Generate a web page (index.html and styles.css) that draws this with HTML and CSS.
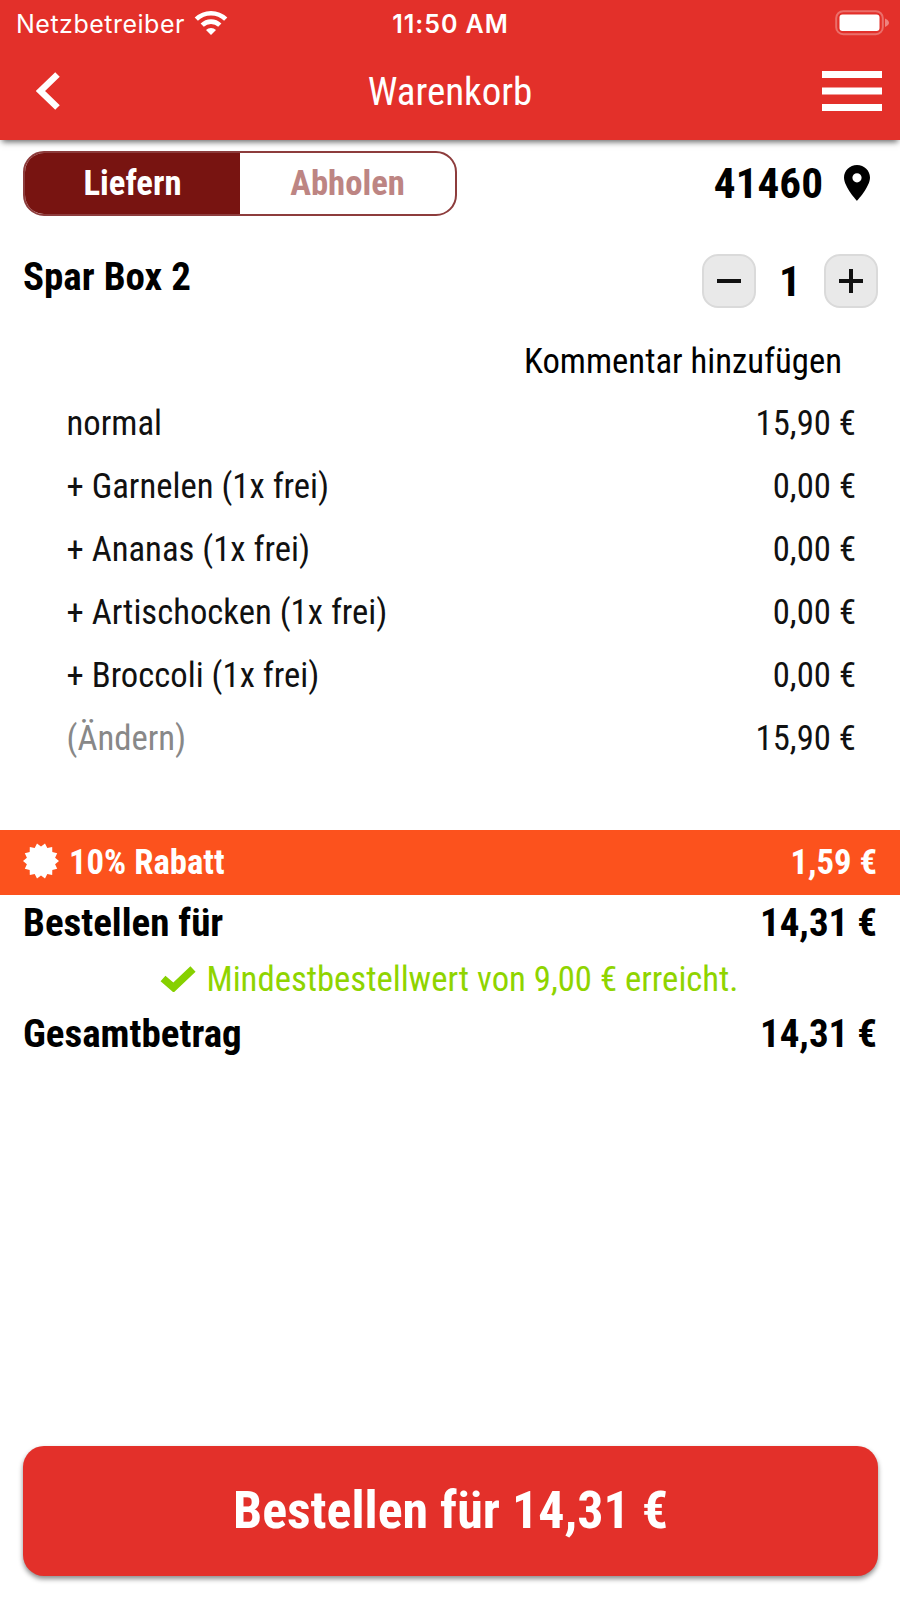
FILE: index.html
```html
<!DOCTYPE html>
<html lang="de">
<head>
<meta charset="utf-8">
<title>Warenkorb</title>
<link rel="stylesheet" href="styles.css">
</head>
<body>
<header class="header">
  <div class="status">
    <div class="carrier"><span>Netzbetreiber</span>
      <svg class="wifi" viewBox="0 0 34 26"><g fill="none" stroke="#fff" stroke-width="4.6"><path d="M2.300 9.200a21 21 0 0 1 29.400 0"/><path d="M8.200 15.200a12.600 12.600 0 0 1 17.600 0"/></g><path d="M17 25l-5-5.100a7.200 7.200 0 0 1 10 0z" fill="#fff"/></svg>
    </div>
    <div class="clock">11:50 AM</div>
    <svg class="battery" viewBox="0 0 54 26"><rect x="1.2" y="1.2" width="46.600" height="23" rx="7" fill="none" stroke="#fff" stroke-opacity=".3" stroke-width="2"/><rect x="4.500" y="4.500" width="40" height="16.500" rx="3" fill="#fff"/><path d="M50 8.500q4 2 4 4.300t-4 4.300z" fill="#fff" fill-opacity=".4"/></svg>
  </div>
  <nav class="nav">
    <svg class="back" viewBox="0 0 24 38"><path d="M21.500 2.500L4.500 19l17 16.500" fill="none" stroke="#fff" stroke-width="6.500"/></svg>
    <h1 class="title">Warenkorb</h1>
    <svg class="menu" viewBox="0 0 60 40"><path d="M0 3.500h60M0 20h60M0 36.500h60" stroke="#fff" stroke-width="7"/></svg>
  </nav>
</header>
<main class="main">
  <section class="mode">
    <div class="toggle"><span class="tab on">Liefern</span><span class="tab">Abholen</span></div>
    <div class="zip"><span>41460</span><svg class="pin" viewBox="0 0 26 36"><path fill-rule="evenodd" d="M13 0C5.700 0 0 5.700 0 12.600 0 22 13 36 13 36s13-14 13-23.400C26 5.700 20.300 0 13 0zm0 8.200a4.600 4.600 0 1 1 0 9.200 4.600 4.600 0 0 1 0-9.200z"/></svg></div>
  </section>
  <section class="item">
    <h2 class="name">Spar Box 2</h2>
    <div class="stepper">
      <span class="step"><svg viewBox="0 0 24 24"><path d="M0 12h24"/></svg></span>
      <span class="count">1</span>
      <span class="step"><svg viewBox="0 0 24 24"><path d="M0 12h24M12 0v24"/></svg></span>
    </div>
  </section>
  <div class="comment">Kommentar hinzufügen</div>
  <ul class="options">
    <li><span>normal</span><span>15,90 €</span></li>
    <li><span>+ Garnelen (1x frei)</span><span>0,00 €</span></li>
    <li><span>+ Ananas (1x frei)</span><span>0,00 €</span></li>
    <li><span>+ Artischocken (1x frei)</span><span>0,00 €</span></li>
    <li><span>+ Broccoli (1x frei)</span><span>0,00 €</span></li>
    <li><span class="edit">(Ändern)</span><span>15,90 €</span></li>
  </ul>
  <section class="discount">
    <svg class="seal" viewBox="-18 -18 36 36"><path fill="#fff" d="M0-14.500L4-17.500 6.300-13.100 11.200-14.100 11.300-9 16.200-7.800 14.100-3.200 18 0 14.100 3.200 16.200 7.800 11.300 9 11.200 14.100 6.300 13.100 4 17.500 0 14.500-4 17.500-6.300 13.100-11.200 14.100-11.300 9-16.200 7.800-14.100 3.200-18 0-14.100-3.200-16.200-7.800-11.300-9-11.200-14.100-6.300-13.100-4-17.500z"/></svg>
    <span class="rebate">10% Rabatt</span><span>1,59 €</span>
  </section>
  <div class="sum"><span>Bestellen für</span><span>14,31 €</span></div>
  <div class="minimum"><svg class="check" viewBox="0 0 36 26"><path d="M3 12.500l10.500 9L33 3" fill="none" stroke="#86d000" stroke-width="7.500"/></svg><span>Mindestbestellwert von 9,00 € erreicht.</span></div>
  <div class="sum"><span>Gesamtbetrag</span><span>14,31 €</span></div>
</main>
<footer class="footer"><button class="order">Bestellen für 14,31 €</button></footer>
</body>
</html>
```
FILE: styles.css
```css
* { box-sizing: border-box; }
body {
  margin: 0; height: 1598px; background: #fff; color: #000;
  display: flex; flex-direction: column;
  font: 34.7px/1 "Roboto Condensed", Roboto, sans-serif; font-stretch: 75%;
  white-space: nowrap;
}
svg { display: block; flex: none; }
.header { height: 140px; background: #e3302a; color: #fff; box-shadow: 0 4px 6px -2px rgba(0,0,0,.6); }
.status { height: 48px; padding: 0 11px 2px 16px; display: grid; grid-template-columns: 1fr 118px 1fr; align-items: center; font: 25px/1 Inter, sans-serif; letter-spacing: .5px; }
.carrier { display: flex; align-items: center; gap: 9px; padding-top: 3px; }
.wifi { width: 34px; height: 26px; margin-top: -4px; }
.clock { font-weight: 600; letter-spacing: .95px; text-align: center; padding-top: 3px; margin: 0 2px 0 -2px; }
.battery { width: 54px; height: 26px; justify-self: end; }
.nav { height: 86px; padding: 0 18px 0 36px; display: grid; grid-template-columns: 60px 1fr 60px; align-items: center; }
.back { width: 24px; height: 38px; }
.title { margin: 0; text-align: center; font-size: 39px; font-weight: 400; padding: 2px 18px 0 0; }
.menu { width: 60px; height: 40px; }
.main { flex: 1; }
.mode { padding: 11px 30px 0 23px; display: flex; justify-content: space-between; }
.toggle { width: 434px; height: 65px; border: 2px solid #8d3c3c; border-radius: 21px; overflow: hidden; display: flex; font-weight: 700; }
.tab { flex: 1; display: flex; align-items: center; justify-content: center; color: #bd8583; }
.on { background: #781411; color: #fff; }
.zip { display: flex; align-items: center; gap: 21px; height: 65px; font-size: 43.2px; font-weight: 700; }
.pin { width: 26px; height: 36px; margin-top: -2px; }
.item { padding: 38px 22px 0 23px; display: flex; justify-content: space-between; align-items: flex-start; }
.name { margin: 0; font-size: 39px; line-height: 46px; }
.stepper { display: flex; align-items: center; }
.step { width: 54px; height: 54px; border: 2px solid #dadada; border-radius: 16px; background: #e9e9e9; display: grid; place-items: center; }
.step svg { width: 24px; height: 24px; stroke: #111; stroke-width: 4; }
.count { width: 68px; padding-top: 2px; text-align: center; font-size: 43.2px; font-weight: 700; }
.comment { padding: 21px 58px 0 0; text-align: right; line-height: 64px; height: 84px; }
.options { list-style: none; margin: 0; padding: 0 44px 0 66.500px; color: #111; }
.options li { height: 63px; line-height: 63px; display: flex; justify-content: space-between; }
.edit { color: #888; }
.discount { margin-top: 60px; height: 65px; padding: 0 23px 1px; background: #fc521d; color: #fff; font-weight: 700; display: flex; align-items: center; }
.seal { width: 36px; height: 36px; margin-top: -3px; }
.rebate { flex: 1; padding-left: 10px; }
.sum { height: 56px; padding: 0 23px; display: flex; justify-content: space-between; align-items: center; font-size: 39px; font-weight: 700; }
.minimum { height: 55px; padding-top: 1px; display: flex; align-items: center; justify-content: center; gap: 10px; color: #8fd400; }
.check { width: 36px; height: 26px; margin-left: -1px; }
.footer { padding: 0 22px 22px 23px; }
.order { display: block; width: 100%; height: 130px; padding: 0; border: 0; border-radius: 21px; background: #e3302a; color: #fff; font: inherit; font-size: 52px; font-weight: 700; box-shadow: 0 3px 5px rgba(0,0,0,.45); }
```
